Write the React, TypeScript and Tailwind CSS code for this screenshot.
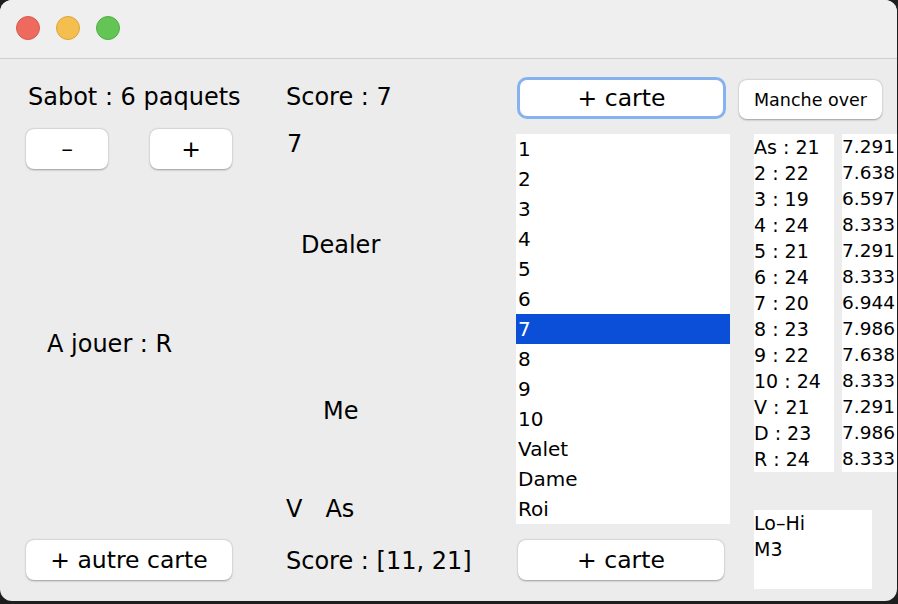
const cards = ["1", "2", "3", "4", "5", "6", "7", "8", "9", "10", "Valet", "Dame", "Roi"];

const counts = [
  ["As : 21", "7.291"],
  ["2 : 22", "7.638"],
  ["3 : 19", "6.597"],
  ["4 : 24", "8.333"],
  ["5 : 21", "7.291"],
  ["6 : 24", "8.333"],
  ["7 : 20", "6.944"],
  ["8 : 23", "7.986"],
  ["9 : 22", "7.638"],
  ["10 : 24", "8.333"],
  ["V : 21", "7.291"],
  ["D : 23", "7.986"],
  ["R : 24", "8.333"],
];

// mac style push button
function MacButton({ label, className = "" }: { label: string; className?: string }) {
  return (
    <div
      className={`flex items-center justify-center bg-white rounded-[8px] shadow-[0_0.5px_2px_rgba(0,0,0,0.35)] text-[23.5px] leading-[28px] ${className}`}
    >
      {label}
    </div>
  );
}

export default function App() {
  return (
    <div
      className="w-[898px] h-[604px] bg-[#1e1e1e] text-black"
      style={{ fontFamily: '"DejaVu Sans", sans-serif' }}
    >
      <div className="w-[897px] h-[601px] rounded-[12px] overflow-hidden bg-[#ececec] flex flex-col">
        {/* Title bar */}
        <div className="h-[59px] shrink-0 bg-[#efefef] border-b border-[#cfcfcf] flex items-center gap-[16px] pl-[16px] pb-[2px]">
          <div className="w-[24px] h-[24px] rounded-full bg-[#ee6a5f] border border-[#d65a50]" />
          <div className="w-[24px] h-[24px] rounded-full bg-[#f5bf4f] border border-[#dca43c]" />
          <div className="w-[24px] h-[24px] rounded-full bg-[#62c554] border border-[#52ad45]" />
        </div>

        {/* Content */}
        <div className="flex pl-[26px]">
          {/* Column 1 */}
          <div className="w-[206px] flex flex-col">
            <div className="pt-[24px] ml-[2px] text-[24px] leading-[28px] whitespace-nowrap">Sabot : 6 paquets</div>
            <div className="mt-[18px] flex justify-between">
              <MacButton label="–" className="w-[82px] h-[40px]" />
              <MacButton label="+" className="w-[82px] h-[40px]" />
            </div>
            <div className="mt-[161px] ml-[21px] text-[24px] leading-[28px] whitespace-nowrap">A jouer : R</div>
            <MacButton label="+ autre carte" className="mt-[182px] w-[206px] h-[40px]" />
          </div>

          {/* Column 2 */}
          <div className="ml-[54px] w-[200px] flex flex-col text-[24px] leading-[28px] whitespace-nowrap">
            <div className="pt-[24px]">Score : 7</div>
            <div className="mt-[19px] ml-[1px]">7</div>
            <div className="mt-[73px] ml-[15px]">Dealer</div>
            <div className="mt-[138px] ml-[37px]">Me</div>
            <div className="mt-[70px] flex gap-[23px]">
              <span>V</span>
              <span>As</span>
            </div>
            <div className="mt-[24px]">Score : [11, 21]</div>
          </div>

          {/* Column 3 */}
          <div className="ml-[30px] w-[214px] flex flex-col">
            <div className="mt-[18px] ml-[1px] w-[209px] h-[42px] rounded-[10px] border-[3px] border-[#86b3ef] bg-white flex items-center justify-center text-[23.5px] leading-[28px]">
              + carte
            </div>
            <div className="mt-[15px] w-[214px] h-[390px] bg-white text-[20px] leading-[30px]">
              {cards.map((c) => (
                <div
                  key={c}
                  className={`h-[30px] pl-[2px] ${c === "7" ? "bg-[#0b4fd9] text-white" : ""}`}
                >
                  {c}
                </div>
              ))}
            </div>
            <MacButton label="+ carte" className="mt-[16px] ml-[2px] w-[206px] h-[40px]" />
          </div>

          {/* Column 4 */}
          <div className="ml-[9px] w-[158px] flex flex-col">
            <div className="mt-[21px] w-[143px] h-[39px] bg-white rounded-[8px] shadow-[0_0.5px_2px_rgba(0,0,0,0.35)] flex items-center justify-center text-[17.5px] leading-[22px] whitespace-nowrap">
              Manche over
            </div>
            <div className="mt-[15px] ml-[15px] flex gap-[8px] h-[338px]">
              <div className="w-[80px] bg-white text-[19px] leading-[26px] whitespace-nowrap">
                {counts.map(([k]) => (
                  <div key={k}>{k}</div>
                ))}
              </div>
              <div className="flex-1 bg-white text-[18.5px] leading-[26px] whitespace-nowrap overflow-hidden">
                {counts.map(([k, v]) => (
                  <div key={k}>{v}</div>
                ))}
              </div>
            </div>
            <div className="mt-[38px] ml-[15px] w-[118px] h-[79px] bg-white text-[19px] leading-[26px]">
              <div>Lo–Hi</div>
              <div>M3</div>
            </div>
          </div>
        </div>
      </div>
    </div>
  );
}
